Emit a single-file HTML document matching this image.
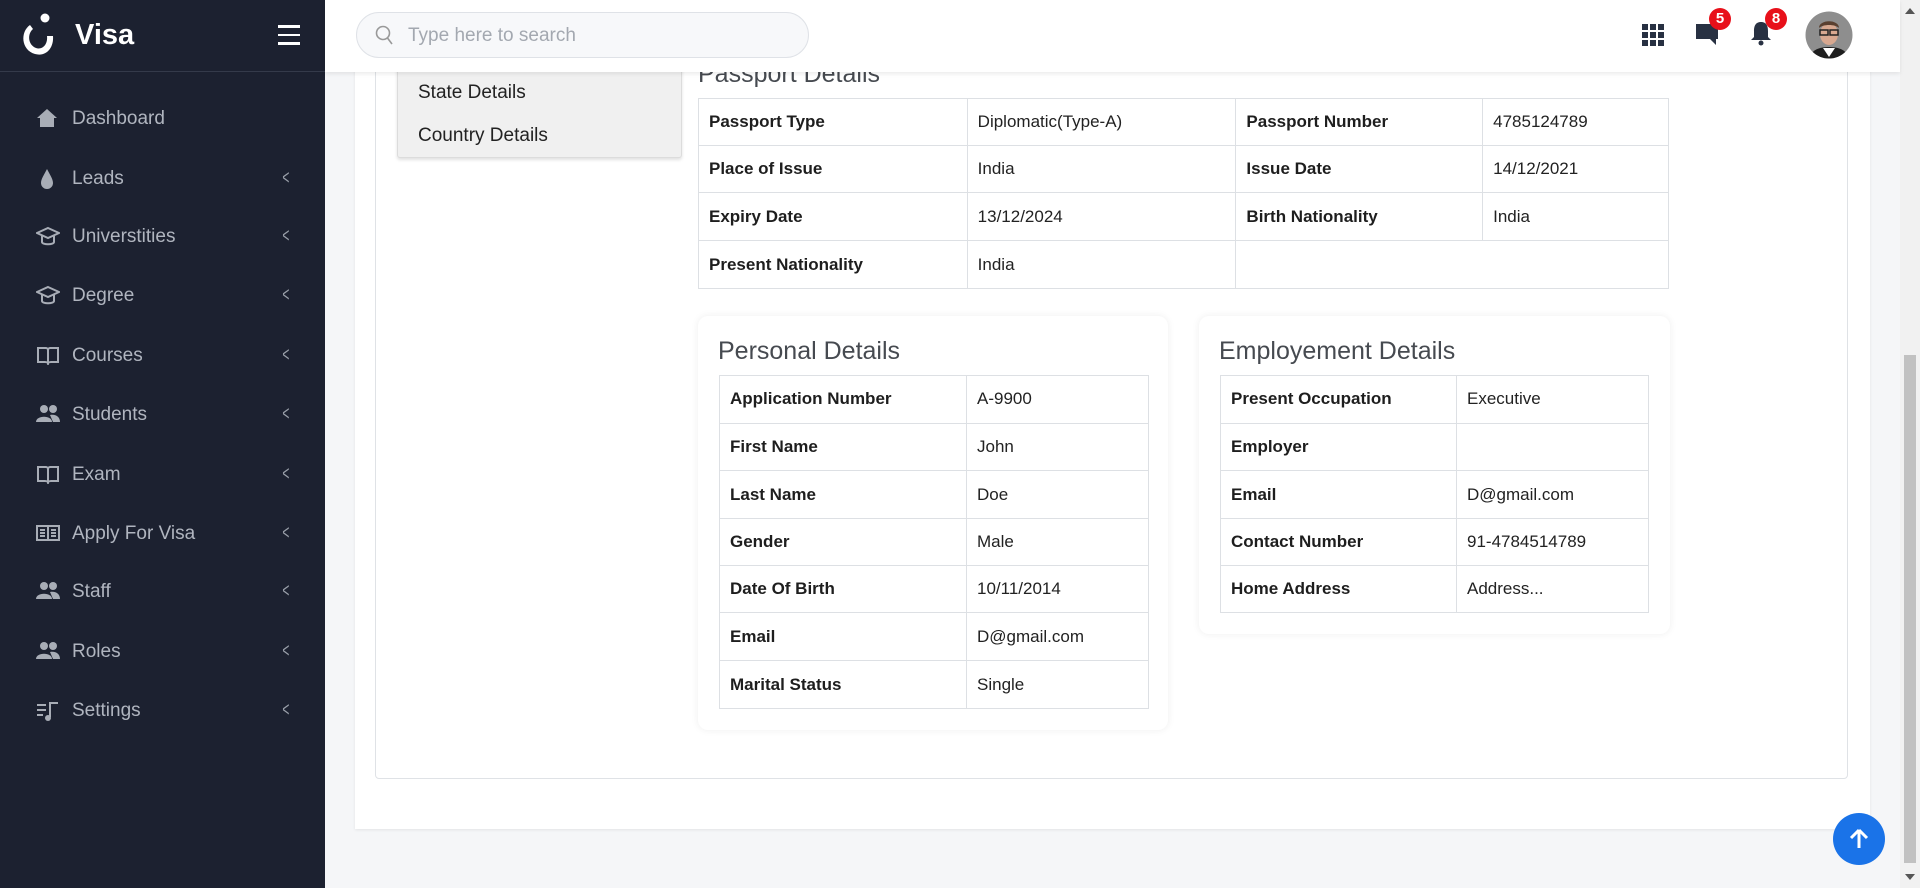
<!DOCTYPE html>
<html><head><meta charset="utf-8"><style>
*{box-sizing:border-box;margin:0;padding:0}
body{width:1920px;height:888px;overflow:hidden;background:#f5f6f8;font-family:"Liberation Sans",Arial,sans-serif;position:relative}
.sb{position:absolute;left:0;top:0;width:325px;height:888px;background:#1c2130}
.logo{height:72px;border-bottom:1px solid #343a4a;position:relative}
.logo .t{position:absolute;left:75px;top:19px;color:#fff;font-size:29px;font-weight:bold}
.ham{position:absolute;left:278px;top:25px;width:22px}
.ham i{display:block;height:2.5px;background:#fff;margin-bottom:6px}
.mi{position:absolute;left:0;width:325px;height:40px;color:#b0b5bf;font-size:19px}
.mi span{position:absolute;left:72px;top:10px}
.mi svg{position:absolute;left:36px;top:10px}
.mi b{position:absolute;left:280px;top:9px;font-weight:normal;font-size:20px;color:#9aa0aa;transform:scaleX(.6)}
.top{position:absolute;left:325px;top:0;width:1575px;height:72px;background:#fff;box-shadow:0 2px 4px rgba(0,0,0,.08);z-index:5}
.search{position:absolute;left:31px;top:12px;width:453px;height:46px;border:1px solid #dfe2e7;border-radius:23px;background:#f7f8fa}
.search span{position:absolute;left:51px;top:12px;color:#a3a8b0;font-size:19px}
.badge{position:absolute;width:22px;height:22px;border-radius:50%;background:#e8101a;color:#fff;font-weight:bold;font-size:15px;text-align:center;line-height:22px}
.main{position:absolute;left:355px;top:40px;width:1515px;height:789px;background:#fff;box-shadow:0 1px 3px rgba(0,0,0,.08)}
.inner{position:absolute;left:375px;top:40px;width:1473px;height:739px;border:1px solid #dfe2e6;border-radius:4px}
.menu{position:absolute;left:397px;top:50px;width:285px;height:108px;background:#f0f0f0;border:1px solid #dcdcdc;border-radius:3px;box-shadow:0 2px 3px rgba(0,0,0,.12)}
.menu div{position:absolute;left:20px;font-size:19px;color:#222}
table{border-collapse:collapse;position:absolute;font-size:17px;color:#222}
td{border:1.5px solid #dde0e4;padding:0 10px;vertical-align:middle}
td.l{font-weight:bold;color:#1e1e1e}
.card{position:absolute;background:#fff;border-radius:10px;box-shadow:0 0 8px rgba(0,0,0,.07)}
.card h3{position:absolute;left:20px;top:21px;font-size:25px;font-weight:normal;color:#464a50}
.scroll{position:absolute;left:1900px;top:0;width:20px;height:888px;background:#f1f1f1}
</style></head><body>
<div class="sb">
<div class="logo">
<svg style="position:absolute;left:18px;top:12px" width="40" height="46" viewBox="0 0 40 46"><circle cx="27" cy="6" r="4.5" fill="#fff"/><path d="M12 13 C2 20 3 38 17 42 C28 45 36 36 35 24 L29 24 C30 33 24 38 18 36 C10 33 9 22 15 17 Z" fill="#fff"/></svg>
<div class="t">Visa</div>
<div class="ham"><i></i><i></i><i></i></div>
</div>
<div class="mi" style="top:98px"><svg width="22" height="20" viewBox="0 0 22 20"><path d="M11 1 L21 10 L18 10 L18 19 L4 19 L4 10 L1 10 Z" fill="#a8adb6"/></svg><span>Dashboard</span></div>
<div class="mi" style="top:158px"><svg width="22" height="22" viewBox="0 0 22 22"><path d="M11 1 C8 7 5 11 5 15 A6 6 0 0 0 17 15 C17 11 14 7 11 1Z" fill="#a8adb6"/></svg><span>Leads</span><b>&lt;</b></div>
<div class="mi" style="top:216px"><svg width="24" height="22" viewBox="0 0 24 22"><path d="M12 2 L23 7 L12 12 L1 7Z M6 10 V16 C6 19 18 19 18 16 V10" fill="none" stroke="#a8adb6" stroke-width="2"/></svg><span>Universtities</span><b>&lt;</b></div>
<div class="mi" style="top:275px"><svg width="24" height="22" viewBox="0 0 24 22"><path d="M12 2 L23 7 L12 12 L1 7Z M6 10 V16 C6 19 18 19 18 16 V10" fill="none" stroke="#a8adb6" stroke-width="2"/></svg><span>Degree</span><b>&lt;</b></div>
<div class="mi" style="top:335px"><svg width="24" height="20" viewBox="0 0 24 20"><path d="M2 3 H10 C11 3 12 4 12 5 V18 C11 17 10 17 9 17 H2Z M22 3 H14 C13 3 12 4 12 5 V18 C13 17 14 17 15 17 H22Z" fill="none" stroke="#a8adb6" stroke-width="2"/></svg><span>Courses</span><b>&lt;</b></div>
<div class="mi" style="top:394px"><svg width="24" height="20" viewBox="0 0 24 20"><circle cx="8" cy="5" r="4" fill="#a8adb6"/><circle cx="17" cy="5" r="4" fill="#a8adb6"/><path d="M0 18 C0 11 16 11 16 18Z M14 11 C20 10 24 13 24 18 H17Z" fill="#a8adb6"/></svg><span>Students</span><b>&lt;</b></div>
<div class="mi" style="top:454px"><svg width="24" height="20" viewBox="0 0 24 20"><path d="M2 3 H10 C11 3 12 4 12 5 V18 C11 17 10 17 9 17 H2Z M22 3 H14 C13 3 12 4 12 5 V18 C13 17 14 17 15 17 H22Z" fill="none" stroke="#a8adb6" stroke-width="2"/></svg><span>Exam</span><b>&lt;</b></div>
<div class="mi" style="top:513px"><svg width="24" height="20" viewBox="0 0 24 20"><path d="M1 3 H23 V17 H1Z M12 3 V17 M4 7 H9 M4 10 H9 M4 13 H9 M15 7 H20 M15 10 H20 M15 13 H20" fill="none" stroke="#a8adb6" stroke-width="2"/></svg><span>Apply For Visa</span><b>&lt;</b></div>
<div class="mi" style="top:571px"><svg width="24" height="20" viewBox="0 0 24 20"><circle cx="8" cy="5" r="4" fill="#a8adb6"/><circle cx="17" cy="5" r="4" fill="#a8adb6"/><path d="M0 18 C0 11 16 11 16 18Z M14 11 C20 10 24 13 24 18 H17Z" fill="#a8adb6"/></svg><span>Staff</span><b>&lt;</b></div>
<div class="mi" style="top:631px"><svg width="24" height="20" viewBox="0 0 24 20"><circle cx="8" cy="5" r="4" fill="#a8adb6"/><circle cx="17" cy="5" r="4" fill="#a8adb6"/><path d="M0 18 C0 11 16 11 16 18Z M14 11 C20 10 24 13 24 18 H17Z" fill="#a8adb6"/></svg><span>Roles</span><b>&lt;</b></div>
<div class="mi" style="top:690px"><svg width="24" height="22" viewBox="0 0 24 22"><path d="M1 5 H10 M1 10 H10 M1 15 H7 M14 17 V3 H22" fill="none" stroke="#a8adb6" stroke-width="2"/><circle cx="12" cy="18" r="3" fill="#a8adb6"/></svg><span>Settings</span><b>&lt;</b></div>
</div>
<div class="top">
<div class="search"><svg style="position:absolute;left:18px;top:12px" width="20" height="22" viewBox="0 0 20 22"><circle cx="8" cy="8" r="6.5" fill="none" stroke="#999" stroke-width="1.6"/><path d="M12.5 13 L17 19" stroke="#999" stroke-width="1.6"/></svg><span>Type here to search</span></div>
<svg style="position:absolute;left:1317px;top:24px" width="22" height="22" viewBox="0 0 22 22" fill="#283142"><rect x="0" y="0" width="6" height="6"/><rect x="8" y="0" width="6" height="6"/><rect x="16" y="0" width="6" height="6"/><rect x="0" y="8" width="6" height="6"/><rect x="8" y="8" width="6" height="6"/><rect x="16" y="8" width="6" height="6"/><rect x="0" y="16" width="6" height="6"/><rect x="8" y="16" width="6" height="6"/><rect x="16" y="16" width="6" height="6"/></svg>
<svg style="position:absolute;left:1370px;top:22px" width="24" height="24" viewBox="0 0 24 24"><path d="M1 2 H23 V17 H21 V23 L15 17 H1Z" fill="#283142"/></svg>
<div class="badge" style="left:1384px;top:8px">5</div>
<svg style="position:absolute;left:1424px;top:20px" width="24" height="26" viewBox="0 0 24 26"><path d="M12 2 C6 2 5 7 5 11 V17 L2 20 H22 L19 17 V11 C19 7 18 2 12 2Z" fill="#283142"/><circle cx="12" cy="23" r="2.5" fill="#283142"/></svg>
<div class="badge" style="left:1440px;top:8px">8</div>
<svg style="position:absolute;left:1480px;top:11px" width="48" height="48" viewBox="0 0 48 48"><defs><clipPath id="c"><circle cx="24" cy="24" r="23.5"/></clipPath></defs><g clip-path="url(#c)"><rect width="48" height="48" fill="#8e8e8e"/><path d="M4 48 C6 38 16 36 24 36 C32 36 42 38 44 48Z" fill="#1e1e1e"/><path d="M18 37 L24 46 L30 37Z" fill="#fff"/><ellipse cx="24" cy="23" rx="9" ry="11" fill="#d8a890"/><path d="M14 17 C14 8 34 8 34 17 C30 13 18 13 14 17Z" fill="#5a4030"/><rect x="15" y="19" width="8" height="5" fill="none" stroke="#222" stroke-width="1.5"/><rect x="25" y="19" width="8" height="5" fill="none" stroke="#222" stroke-width="1.5"/></g></svg>
</div>
<div class="main"></div>
<div class="inner"></div>
<div class="menu"><div style="top:31px">State Details</div><div style="top:74px">Country Details</div></div>
<div style="position:absolute;left:698px;top:60px;font-size:25px;color:#464a50">Passport Details</div>
<table style="left:698px;top:98px;width:971px">
<colgroup><col style="width:269px"><col style="width:269px"><col style="width:247px"><col style="width:186px"></colgroup>
<tr style="height:47px"><td class="l">Passport Type</td><td>Diplomatic(Type-A)</td><td class="l">Passport Number</td><td>4785124789</td></tr>
<tr style="height:47px"><td class="l">Place of Issue</td><td>India</td><td class="l">Issue Date</td><td>14/12/2021</td></tr>
<tr style="height:48px"><td class="l">Expiry Date</td><td>13/12/2024</td><td class="l">Birth Nationality</td><td>India</td></tr>
<tr style="height:48px"><td class="l">Present Nationality</td><td>India</td><td colspan="2"></td></tr>
</table>
<div class="card" style="left:698px;top:316px;width:470px;height:414px"><h3>Personal Details</h3></div>
<table style="left:719px;top:375px;width:430px">
<colgroup><col style="width:247px"><col></colgroup>
<tr style="height:47.5px"><td class="l">Application Number</td><td>A-9900</td></tr>
<tr style="height:47.5px"><td class="l">First Name</td><td>John</td></tr>
<tr style="height:48px"><td class="l">Last Name</td><td>Doe</td></tr>
<tr style="height:46.5px"><td class="l">Gender</td><td>Male</td></tr>
<tr style="height:47.5px"><td class="l">Date Of Birth</td><td>10/11/2014</td></tr>
<tr style="height:48px"><td class="l">Email</td><td>D@gmail.com</td></tr>
<tr style="height:48px"><td class="l">Marital Status</td><td>Single</td></tr>
</table>
<div class="card" style="left:1199px;top:316px;width:471px;height:318px"><h3>Employement Details</h3></div>
<table style="left:1220px;top:375px;width:429px">
<colgroup><col style="width:236px"><col></colgroup>
<tr style="height:47.5px"><td class="l">Present Occupation</td><td>Executive</td></tr>
<tr style="height:47.5px"><td class="l">Employer</td><td></td></tr>
<tr style="height:48px"><td class="l">Email</td><td>D@gmail.com</td></tr>
<tr style="height:46.5px"><td class="l">Contact Number</td><td>91-4784514789</td></tr>
<tr style="height:47.5px"><td class="l">Home Address</td><td>Address...</td></tr>
</table>
<div style="position:absolute;left:1833px;top:813px;width:52px;height:52px;border-radius:50%;background:#1a73e8"><svg style="position:absolute;left:16px;top:15px" width="20" height="22" viewBox="0 0 20 22"><path d="M10 2 L18 10 M10 2 L2 10 M10 2 V20" stroke="#fff" stroke-width="3" fill="none"/></svg></div>
<div class="scroll"><div style="position:absolute;left:4px;top:355px;width:12px;height:508px;background:#c1c1c1"></div><div style="position:absolute;left:5px;top:8px;border:5px solid transparent;border-bottom:6px solid #555;border-top:0"></div><div style="position:absolute;left:5px;top:874px;border:5px solid transparent;border-top:6px solid #555;border-bottom:0"></div></div>
</body></html>
